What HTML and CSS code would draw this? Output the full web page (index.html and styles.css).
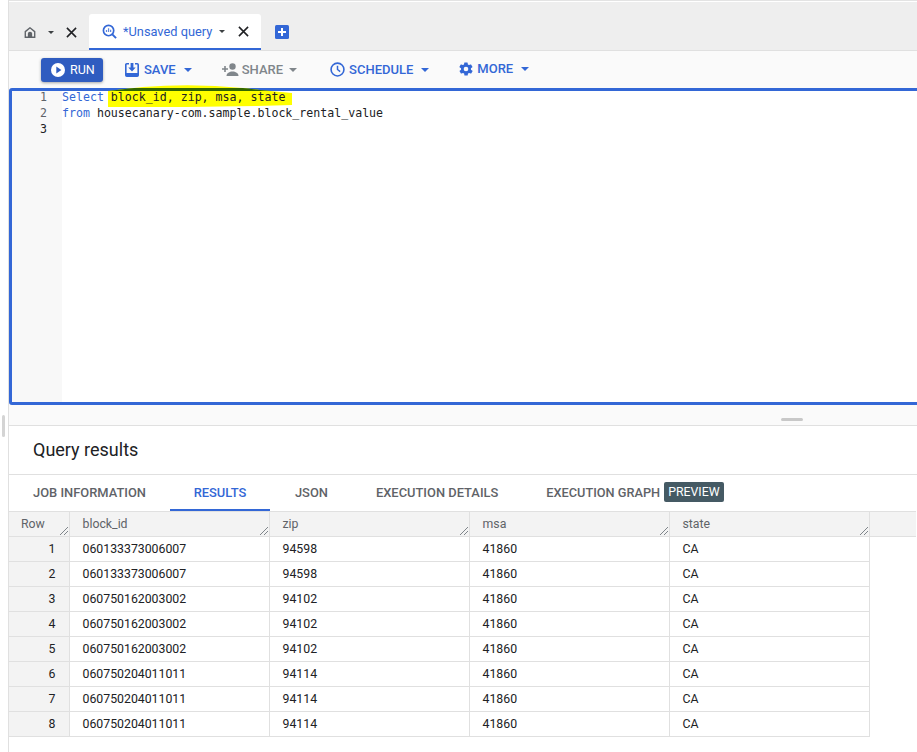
FILE: index.html
```html
<!DOCTYPE html>
<html lang="en">
<head>
<meta charset="utf-8">
<title>Unsaved query</title>
<link rel="stylesheet" href="styles.css">
</head>
<body>
<div class="page">
  <aside class="rail"><span class="rail-grip"></span></aside>
  <main class="main">
    <nav class="tabbar">
      <div class="hometab">
        <svg class="homeicon" viewBox="0 0 14 14"><path d="M7 1.500 1.500 6v6.500h11V6z" fill="none" stroke="#5f6368" stroke-width="1.600"/><path d="M4.500 12.500V8.500a2.500 2.500 0 0 1 5 0v4z" fill="#5f6368"/></svg>
        <span class="caret caret-dark"></span>
        <svg class="close" viewBox="0 0 12 12"><path d="M1 1l10 10M11 1 1 11" stroke="#202124" stroke-width="1.700"/></svg>
      </div>
      <div class="querytab">
        <svg class="queryicon" viewBox="0 0 16 16"><circle cx="7" cy="7" r="5.500" fill="none" stroke="#3367d6" stroke-width="1.800"/><path d="M11 11l4 4" stroke="#3367d6" stroke-width="2"/><path d="M4.800 6.500v2M7 4.500v4M9.200 6v2.500" stroke="#5f86dc" stroke-width="1.300"/></svg>
        <span class="querytitle">*Unsaved query</span>
        <span class="caret caret-dark"></span>
        <svg class="close" viewBox="0 0 12 12"><path d="M1 1l10 10M11 1 1 11" stroke="#202124" stroke-width="1.700"/></svg>
      </div>
      <svg class="addtab" viewBox="0 0 14 14"><rect width="14" height="14" rx="1.500" fill="#3367d6"/><path d="M7 3v8M3 7h8" stroke="#fff" stroke-width="2"/></svg>
    </nav>
    <div class="toolbar">
      <button class="run"><svg class="runicon" viewBox="0 0 14 14"><circle cx="7" cy="7" r="7" fill="#fff"/><path d="M5.300 3.600v6.800L10.400 7z" fill="#2f5cc0"/></svg>RUN</button>
      <span class="action act-save"><svg class="acticon" viewBox="0 0 14 14"><path d="M4 .8H1.800a1 1 0 0 0-1 1v10.400a1 1 0 0 0 1 1h10.400a1 1 0 0 0 1-1V1.800a1 1 0 0 0-1-1H10" fill="none" stroke="#3367d6" stroke-width="1.600"/><path d="M1 10h12v3H1z" fill="#3367d6"/><path d="M5.600 0h2.800v4.500h2.300L7 8.600 3.300 4.500h2.300z" fill="#3367d6"/></svg>SAVE<span class="caret"></span></span>
      <span class="action act-share"><svg class="shareicon" viewBox="0 0 17 13"><circle cx="10.500" cy="3.500" r="3.200" fill="#80868b"/><path d="M4.500 13c0-3 3-4.500 6-4.500s6 1.500 6 4.500z" fill="#80868b"/><path d="M3 3v6M0 6h6" stroke="#80868b" stroke-width="1.600"/></svg>SHARE<span class="caret caret-grey"></span></span>
      <span class="action act-schedule"><svg class="acticon clock" viewBox="0 0 14 14"><circle cx="7" cy="7" r="6" fill="none" stroke="#3367d6" stroke-width="1.500"/><path d="M7 3.500V7l2.500 2" fill="none" stroke="#3367d6" stroke-width="1.400"/></svg>SCHEDULE<span class="caret"></span></span>
      <span class="action act-more"><svg class="acticon gear" viewBox="0 0 24 24"><path fill="#3367d6" d="M19.400 13a7.500 7.500 0 0 0 0-2l2.100-1.600a.5.5 0 0 0 .1-.6l-2-3.500a.5.5 0 0 0-.6-.2l-2.500 1a7.300 7.300 0 0 0-1.700-1l-.4-2.600a.5.5 0 0 0-.5-.4h-4a.5.5 0 0 0-.5.4l-.4 2.600a7.300 7.300 0 0 0-1.700 1l-2.500-1a.5.5 0 0 0-.6.2l-2 3.500a.5.5 0 0 0 .1.600L4.600 11a7.500 7.500 0 0 0 0 2l-2.100 1.600a.5.5 0 0 0-.1.600l2 3.500c.1.200.4.300.6.200l2.500-1a7.300 7.300 0 0 0 1.700 1l.4 2.600c0 .2.200.4.5.4h4c.3 0 .5-.2.500-.4l.4-2.600a7.300 7.300 0 0 0 1.700-1l2.500 1c.2.100.5 0 .6-.2l2-3.500a.5.5 0 0 0-.1-.6zM12 15.500a3.500 3.500 0 1 1 0-7 3.500 3.500 0 0 1 0 7z"/></svg>MORE<span class="caret"></span></span>
    </div>
    <section class="editor">
      <div class="linenos"><div>1</div><div>2</div><div class="ln-active">3</div></div>
      <pre class="code"><span class="kw">Select</span> block_id, zip, msa, state
<span class="kw">from</span> housecanary-com.sample.block_rental_value
</pre>
    </section>
    <div class="splitter"><span class="grip"></span></div>
    <h2 class="restitle">Query results</h2>
    <div class="restabs">
      <span class="rt rt-job">JOB INFORMATION</span>
      <span class="rt rt-active">RESULTS</span>
      <span class="rt rt-json">JSON</span>
      <span class="rt rt-exec">EXECUTION DETAILS</span>
      <span class="rt rt-graph">EXECUTION GRAPH</span><span class="badge">PREVIEW</span>
    </div>
    <table class="grid">
      <thead>
        <tr><th class="c-row">Row</th><th class="c-wide">block_id</th><th class="c-col">zip</th><th class="c-col">msa</th><th class="c-col">state</th><th class="c-fill"></th></tr>
      </thead>
      <tbody>
        <tr><td class="c-row">1</td><td>060133373006007</td><td>94598</td><td>41860</td><td>CA</td></tr>
        <tr><td class="c-row">2</td><td>060133373006007</td><td>94598</td><td>41860</td><td>CA</td></tr>
        <tr><td class="c-row">3</td><td>060750162003002</td><td>94102</td><td>41860</td><td>CA</td></tr>
        <tr><td class="c-row">4</td><td>060750162003002</td><td>94102</td><td>41860</td><td>CA</td></tr>
        <tr><td class="c-row">5</td><td>060750162003002</td><td>94102</td><td>41860</td><td>CA</td></tr>
        <tr><td class="c-row">6</td><td>060750204011011</td><td>94114</td><td>41860</td><td>CA</td></tr>
        <tr><td class="c-row">7</td><td>060750204011011</td><td>94114</td><td>41860</td><td>CA</td></tr>
        <tr><td class="c-row">8</td><td>060750204011011</td><td>94114</td><td>41860</td><td>CA</td></tr>
      </tbody>
    </table>
  </main>
  <svg class="marker" viewBox="0 0 186 25">
    <defs><clipPath id="stroke-shape"><path d="M1 7 L18 5 L36 3 Q86 -1 136 4 L153 6 L185 9 L185 21 L150 22 L80 23 L1 23 Z"/></clipPath></defs>
    <path d="M1 7 L18 5 L36 3 Q86 -1 136 4 L153 6 L185 9 L185 21 L150 22 L80 23 L1 23 Z" fill="#ffff00"/>
    <rect x="0" y="4" width="186" height="3" fill="#336700" clip-path="url(#stroke-shape)"/>
  </svg>
</div>
</body>
</html>
```
FILE: styles.css
```css
* { box-sizing: border-box; }
html, body { margin: 0; padding: 0; background: #fff; }
body { width: 917px; height: 752px; overflow: hidden; font-family: Roboto, "Liberation Sans", sans-serif; color: #202124; }
.page { position: relative; display: flex; width: 917px; height: 752px; overflow: hidden; }
.rail { flex: 0 0 9px; width: 9px; border-right: 1px solid #e0e0e0; position: relative; }
.rail-grip { position: absolute; left: 2px; top: 415px; width: 3px; height: 22px; background: #d4d4d4; border-radius: 2px; }
.main { flex: 1; min-width: 0; padding-top: 1px; border-top: 1px solid #e3e3e3; }

.tabbar { display: flex; align-items: flex-end; height: 49px; background: #eeeeee; border-bottom: 1px solid #e0e0e0; }
.hometab { display: flex; align-items: center; width: 80px; height: 36px; padding: 0 0 0 15px; }
.homeicon { width: 12px; height: 13px; }
.hometab .caret { margin-left: 12px; }
.hometab .close { margin-left: 11.500px; }
.querytab { display: flex; align-items: center; width: 172px; height: 36px; padding: 1px 0 0 13px; background: #fff; border-bottom: 2px solid #3367d6; border-radius: 3px 3px 0 0; }
.queryicon { width: 15px; height: 15px; }
.querytitle { margin-left: 6px; font-size: 12.800px; color: #3367d6; }
.querytab .caret { margin-left: 7px; }
.querytab .close { margin-left: 13px; }
.close { width: 11px; height: 11px; }
.addtab { width: 14px; height: 14px; margin: 0 0 11px 14px; }
.caret { display: inline-block; width: 0; height: 0; border: 4px solid transparent; border-bottom: 0; border-top-color: #3367d6; margin-left: 8px; }
.caret-dark { border-top-color: #3c4043; border-width: 3px 3.500px 0; border-bottom: 0; }
.caret-grey { border-top-color: #80868b; margin-left: 6px; }

.toolbar { display: flex; align-items: center; height: 37px; background: #fafafa; padding-left: 32px; }
.run { display: flex; align-items: center; width: 62px; height: 24px; padding: 0 0 0 10px; background: #2f5cc0; border: 0; border-radius: 3px; color: #fff; font: 400 12.500px Roboto, sans-serif; box-shadow: 0 1px 3px rgba(60,64,67,.45); }
.runicon { width: 14px; height: 14px; margin-right: 5px; }
.action { display: flex; align-items: center; font-size: 13px; font-weight: 500; color: #3367d6; }
.act-save { margin-left: 22px; }
.act-share { margin-left: 30px; color: #80868b; }
.act-schedule { margin-left: 33px; }
.act-more { margin-left: 29px; margin-bottom: 2px; }
.acticon { width: 14px; height: 14px; margin-right: 5px; }
.clock { width: 15px; height: 15px; margin-right: 4px; }
.gear { width: 16px; height: 16px; margin-right: 3px; }
.shareicon { width: 17px; height: 13px; margin-right: 3px; }

.editor { display: flex; width: 920px; height: 317px; border: 3px solid #3367d6; border-radius: 3px 0 0 3px; background: #fff; }
.linenos { width: 50px; background: #f8f8f8; font: 11.600px/16px "DejaVu Sans Mono", monospace; color: #5f6368; text-align: right; padding: 0 15px 0 0; }
.linenos div:first-child { margin-top: -2px; }
.ln-active { color: #202124; }
.code { position: relative; z-index: 2; margin: -2px 0 0; padding: 0; font: 11.600px/16px "DejaVu Sans Mono", monospace; color: #202124; }
.kw { color: #3367d6; }

.splitter { display: flex; justify-content: center; height: 21px; background: #fafafa; border-bottom: 1px solid #e0e0e0; padding: 13px 0 0 646px; width: 920px; }
.grip { width: 22px; height: 3px; background: #c8c8c8; border-radius: 2px; }
.restitle { margin: 0; height: 49px; padding: 13px 0 0 24px; font-size: 18px; font-weight: 400; line-height: 22px; color: #202124; border-bottom: 1px solid #e0e0e0; }

.restabs { display: flex; align-items: center; height: 36px; }
.rt { display: flex; align-items: center; height: 36px; padding-bottom: 2px; font-size: 12.900px; font-weight: 500; color: #5f6368; }
.rt-job { margin-left: 24px; }
.rt-active { margin-left: 24px; width: 100px; justify-content: center; color: #3367d6; border-bottom: 2px solid #3367d6; padding-bottom: 0; }
.rt-json { margin-left: 25px; }
.rt-exec { margin-left: 48px; }
.rt-graph { margin-left: 48px; font-size: 12.750px; }
.badge { margin: 0 0 2px 4px; padding: 0 4px; height: 20px; line-height: 20px; border-radius: 2px; background: #455a64; color: #fff; font-size: 12.300px; }

.grid { border-collapse: collapse; table-layout: fixed; width: 860px; font-size: 12.300px; }
.grid th { height: 25px; background: #f3f3f3; color: #5f6368; font-weight: 400; text-align: left; padding: 0 12px 0 13px; border: 1px solid #e0e0e0; border-left: 0; position: relative; }
.grid th::after { content: ""; position: absolute; right: 1px; bottom: 1px; width: 8px; height: 8px; background: linear-gradient(135deg, transparent 46%, #80868b 46%, #80868b 54%, transparent 54%, transparent 70%, #80868b 70%, #80868b 78%, transparent 78%); }
.grid th.c-fill::after { display: none; }
.grid th.c-fill { border-right: 0; width: 47px; }
.grid td { height: 25px; padding: 0 12px 0 13px; border: 1px solid #e0e0e0; border-left: 0; color: #202124; }
.grid .c-row { width: 60px; background: #f3f3f3; }
.grid th.c-row { padding-left: 12px; }
.grid td.c-row { text-align: right; padding-right: 13px; }
.grid .c-wide { width: 200px; }
.grid .c-col { width: 200px; }

.marker { position: absolute; z-index: 1; left: 107px; top: 84px; width: 186px; height: 25px; pointer-events: none; }
```
